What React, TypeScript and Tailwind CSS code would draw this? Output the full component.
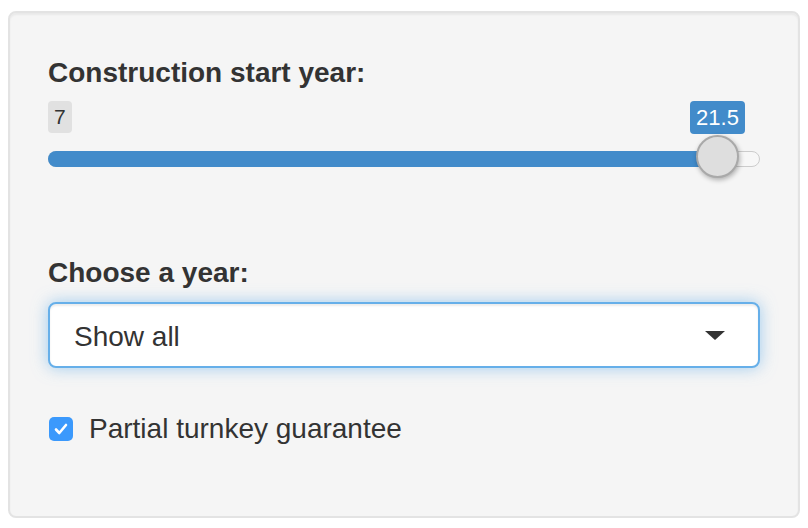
import React from "react";

export default function App() {
  const font = { fontFamily: '"Liberation Sans", Arial, Helvetica, sans-serif' };
  return (
    <div className="w-[808px] h-[528px] bg-white overflow-hidden pt-[11px] pl-[8px]" style={font}>
      <div className="w-[792px] h-[507px] border-2 border-[#e3e3e3] rounded-[8px] bg-[#f5f5f5] shadow-[inset_0_2px_2px_rgba(0,0,0,0.05)] px-[38px] pt-[40px] text-[#333333]">
        <div className="h-[40px] leading-[40px] text-[28px] font-bold">Construction start year:</div>

        <div className="relative mt-[8px] w-[712px]">
          <div className="flex">
            <div className="h-[32px] px-[6px] rounded-[4px] bg-[#e1e1e1] text-[21px] leading-[32px] text-[#333]">7</div>
          </div>
          <div className="absolute left-[642px] top-0 h-[33px] w-[55px] rounded-[4px] bg-[#428bca] text-white text-[22px] leading-[33px] text-center">
            21.5
          </div>
          <div className="relative mt-[18px] h-[16px] rounded-full border border-[#cccccc] bg-[#f7f7f7]">
            <div className="absolute left-[-1px] top-[-1px] h-[16px] w-[670px] rounded-full bg-[#428bca]" />
            <div className="absolute left-[647px] top-[-17px] w-[43px] h-[43px] rounded-full border-2 border-[#a9a9a9] bg-[#dedede] shadow-[1px_2px_5px_rgba(0,0,0,0.3)]" />
          </div>
        </div>

        <div className="mt-[86px] h-[40px] leading-[40px] text-[28px] font-bold">Choose a year:</div>

        <div className="mt-[9px] w-[712px] h-[66px] rounded-[8px] border-2 border-[#66afe9] bg-white shadow-[inset_0_2px_2px_rgba(0,0,0,0.075),0_0_16px_rgba(102,175,233,0.6)] flex items-center justify-between pl-[24px] pr-[33px] pt-[4px]">
          <span className="text-[28px] text-[#333]">Show all</span>
          <svg width="20" height="9" viewBox="0 0 20 9" className="mb-[3px]">
            <polygon points="0,0 20,0 10,9" fill="#333333" />
          </svg>
        </div>

        <div className="mt-[41px] flex items-center h-[40px]">
          <div className="ml-[1px] w-[24px] h-[24px] rounded-[5px] bg-[#3b99fc] flex items-center justify-center">
            <svg width="18" height="18" viewBox="0 0 18 18">
              <path d="M4 9.5 L7.3 13 L14 5" stroke="white" strokeWidth="2.6" fill="none" strokeLinecap="round" strokeLinejoin="round" />
            </svg>
          </div>
          <span className="ml-[16px] text-[28px] leading-[40px] text-[#333]">Partial turnkey guarantee</span>
        </div>
      </div>
    </div>
  );
}
